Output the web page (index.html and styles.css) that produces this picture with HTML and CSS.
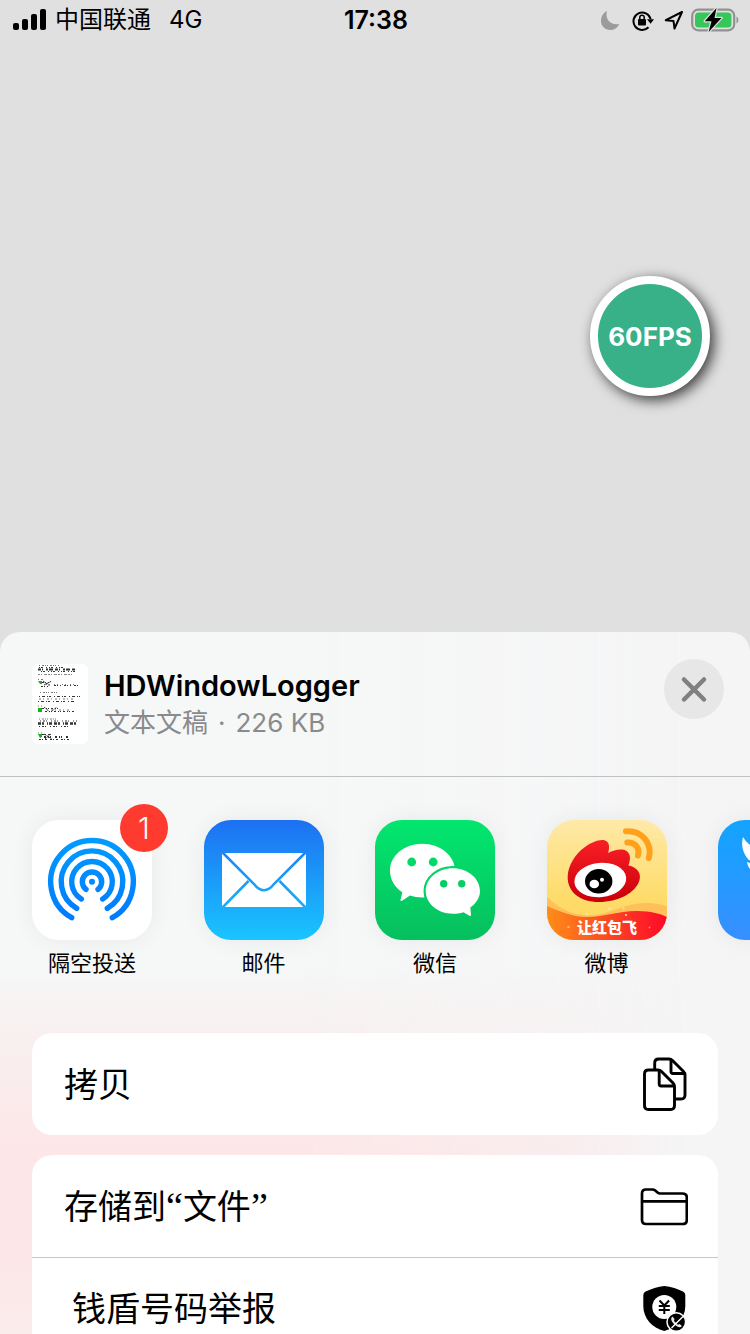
FILE: index.html
```html
<!DOCTYPE html>
<html lang="zh-CN">
<head>
<meta charset="utf-8">
<meta name="viewport" content="width=device-width, initial-scale=1">
<title>HDWindowLogger</title>
<link rel="stylesheet" href="styles.css">
</head>
<body>
<main class="screen">
  <section class="stage">
    <header class="status">
      <div class="status-left">
        <svg class="signal" width="34" height="22" viewBox="0 0 34 22" aria-hidden="true">
          <rect x="0" y="14" width="6" height="7" rx="2"/><rect x="9" y="10" width="6" height="11" rx="2"/><rect x="18" y="5" width="6" height="16" rx="2"/><rect x="27" y="0" width="6" height="21" rx="2"/>
        </svg>
        <span class="carrier">中国联通</span>
        <span class="network">4G</span>
      </div>
      <time class="clock">17:38</time>
      <div class="status-right">
        <svg width="25" height="24" viewBox="0 0 25 24" aria-hidden="true"><path d="M7 3C5 10 9 17.500 19.300 16C17.500 20 14 22 10.300 22C5 22 1 18 1 12.800C1 8.500 3.500 4.500 7 3Z" fill="#9b9b9b"/></svg>
        <svg width="25" height="24" viewBox="0 0 25 24" aria-hidden="true">
          <path d="M16.500 19.200A8.700 8.700 0 1 1 18.600 11" fill="none" stroke="#000" stroke-width="2"/>
          <path d="M15 11.300H22L18.600 15.800Z"/><rect x="6" y="11" width="8" height="6.500" rx="1"/>
          <path d="M7.800 11V9.500A2.200 2.200 0 0 1 12.200 9.500V11" fill="none" stroke="#000" stroke-width="1.500"/>
        </svg>
        <svg width="20" height="24" viewBox="0 0 20 24" aria-hidden="true"><path d="M18 4L1.800 12.200L9.500 12.900L10.500 20.500Z" fill="none" stroke="#000" stroke-width="2" stroke-linejoin="round"/></svg>
        <svg width="48" height="26" viewBox="0 0 48 26" aria-hidden="true">
          <rect x="1.200" y="2.700" width="42" height="20.600" rx="6" fill="none" stroke="#929292" stroke-width="2.200"/>
          <rect x="4" y="5.500" width="36.400" height="15" rx="3.500" fill="#35c759"/>
          <path d="M45.500 9.500C48 11 48 15 45.500 16.500Z" fill="#929292"/>
          <path d="M25.500 1L13.800 14.200H20.500L17.600 25L30.500 11H23.500Z" stroke="#e0e0e0" stroke-width="2.500" paint-order="stroke" stroke-linejoin="round"/>
        </svg>
      </div>
    </header>
    <button class="fps" type="button">60FPS</button>
  </section>

  <section class="sheet">
    <header class="file">
      <svg class="thumb" width="56" height="80" viewBox="0 0 56 80" aria-hidden="true">
        <g fill="none" stroke="#333" stroke-width="1">
          <path d="M7 1.500H27M6 15.500H11M8 28.500H27M6 42H10M7 55H26M6 69H10" stroke-dasharray="1 2 2 1 1 1" stroke="#777"/>
          <path d="M6 5.500H44" stroke-width="2" stroke-dasharray="3 1 1 3 2 1 4 2"/>
          <path d="M7 3.500H34M9 7.500H45" stroke-dasharray="1 1 2 3 1 2"/>
          <path d="M6 10.500H41" stroke-dasharray="2 1 1 2 3 1" stroke="#888"/>
          <path d="M10 18.500H20M9 22.500H19M22 21.500H47" stroke-dasharray="2 1 1 2 1 3"/>
          <path d="M11 17L18 22M12 21L20 17" stroke-dasharray="2 1"/>
          <path d="M14 20.500H42" stroke-dasharray="1 2 1 4" stroke="#777"/>
          <path d="M7 32.500H48M6 37.500H42" stroke-dasharray="1 2 3 2 1 1 2 3"/>
          <path d="M7 35H42" stroke-dasharray="2 2 1 3" stroke="#777"/>
          <path d="M10 44.500H28M13 47.500H42" stroke-dasharray="2 2 1 1 1 2"/>
          <path d="M12 43L18 48M20 47L25 43" stroke-dasharray="2 1"/>
          <path d="M15 46H38" stroke-dasharray="1 3 2 2" stroke="#777"/>
          <path d="M6 59.500H47" stroke-width="2.500" stroke-dasharray="3 1 2 3 1 1 3 2"/>
          <path d="M8 57H45M7 62.500H40" stroke-dasharray="1 2 2 1 1 4"/>
          <path d="M10 70.500H20M7 75.500H40" stroke-dasharray="2 1 1 2 2 3"/>
          <path d="M12 70L20 75M13 75L19 70" stroke-dasharray="2 1"/>
          <path d="M12 73H38" stroke-width="2" stroke-dasharray="2 2 1 1 1 4"/>
        </g>
        <g fill="#13b51b"><path d="M6 17H10V20H8ZM6 44H10V48H6ZM6 70H10V73L8 74Z"/></g>
      </svg>
      <div class="file-text">
        <h1 class="file-name">HDWindowLogger</h1>
        <p class="file-meta">文本文稿<span class="dot">·</span>226 KB</p>
      </div>
      <button class="close" type="button" aria-label="关闭">
        <svg width="28" height="28" viewBox="0 0 28 28" aria-hidden="true"><path d="M4 4.500L24 24.500M24 4.500L4 24.500" stroke="#808082" stroke-width="4.500" stroke-linecap="round"/></svg>
      </button>
    </header>

    <nav class="apps">
      <button class="app" type="button">
        <span class="tile">
          <svg class="art" viewBox="0 0 120 120" aria-hidden="true">
            <defs><linearGradient id="air" gradientUnits="userSpaceOnUse" x1="0" y1="18" x2="0" y2="100"><stop offset="0" stop-color="#009cff"/><stop offset="1" stop-color="#007aff"/></linearGradient></defs>
            <rect width="120" height="120" fill="#fff"/>
            <g fill="none" stroke="url(#air)" stroke-width="5.400" stroke-linecap="round">
              <path d="M39.700 97.700A41.300 41.300 0 1 1 80.300 97.700"/><path d="M44.700 88.400A30.800 30.800 0 1 1 75.300 88.400"/><path d="M49.300 79A20.300 20.300 0 1 1 70.700 79"/><path d="M54 69.300A9.700 9.700 0 1 1 66 69.300"/>
            </g>
            <circle cx="60" cy="61.700" r="3" fill="#008cff"/>
          </svg>
        </span>
        <span class="app-name">隔空投送</span>
        <span class="badge">1</span>
      </button>
      <button class="app" type="button">
        <span class="tile">
          <svg class="art" viewBox="0 0 120 120" aria-hidden="true">
            <defs><linearGradient id="mail" gradientUnits="userSpaceOnUse" x1="0" y1="0" x2="0" y2="120"><stop offset="0" stop-color="#1d70f2"/><stop offset="1" stop-color="#19c5ff"/></linearGradient></defs>
            <rect width="120" height="120" fill="url(#mail)"/>
            <rect x="18" y="33" width="84" height="54" rx="1.500" fill="#fff"/>
            <path d="M18 32L50.500 64.500C56 72 64 72 69.500 64.500L102 32M18 88L44.500 61M102 88L75.500 61" fill="none" stroke="url(#mail)" stroke-width="2.500"/>
          </svg>
        </span>
        <span class="app-name">邮件</span>
      </button>
      <button class="app" type="button">
        <span class="tile">
          <svg class="art" viewBox="0 0 120 120" aria-hidden="true">
            <defs><linearGradient id="chat" gradientUnits="userSpaceOnUse" x1="0" y1="0" x2="0" y2="120"><stop offset="0" stop-color="#02e66e"/><stop offset="1" stop-color="#06bf5e"/></linearGradient></defs>
            <rect width="120" height="120" fill="url(#chat)"/>
            <path d="M47.300 23.700C65 23.700 80 35.500 80 50.500C80 65.500 65 77.500 47.300 77.500C43 77.500 38.500 76.800 35 75.600L27 80.800C25.800 81.500 25.300 81 25.600 79.800L27.300 72.300C19.500 67 15 59.500 15 50.500C15 35.500 29.600 23.700 47.300 23.700Z" fill="#fff"/>
            <circle cx="36.700" cy="42" r="4.400" fill="#03d968"/><circle cx="58.200" cy="42" r="4.400" fill="#03d968"/>
            <path d="M77.800 48.300C92.800 48.300 105 58.500 105 71C105 77.500 101 83.500 95.300 87.600L96 94.800C96 96.200 95 96.400 94 95.600L88.500 92.200C85 93.200 81.500 93.700 77.800 93.700C62.800 93.700 50.700 83.500 50.700 71C50.700 58.500 62.800 48.300 77.800 48.300Z" fill="#fff" stroke="url(#chat)" stroke-width="4.400" paint-order="stroke"/>
            <circle cx="68.700" cy="63.800" r="3.700" fill="#04cf64"/><circle cx="86.700" cy="63.800" r="3.700" fill="#04cf64"/>
          </svg>
        </span>
        <span class="app-name">微信</span>
      </button>
      <button class="app" type="button">
        <span class="tile">
          <svg class="art" viewBox="0 0 120 120" aria-hidden="true">
            <defs>
              <linearGradient id="sun" x1="0" y1="0" x2="0" y2="1"><stop offset="0" stop-color="#fee9a8"/><stop offset=".7" stop-color="#fedb66"/></linearGradient>
              <linearGradient id="ribbon" x1="0" y1="0" x2="1" y2="0"><stop offset="0" stop-color="#ff8d18"/><stop offset=".5" stop-color="#fb4a20"/><stop offset="1" stop-color="#ff0829"/></linearGradient>
              <linearGradient id="flame" x1="0" y1="0" x2="0" y2="1"><stop offset="0" stop-color="#fa1f27"/><stop offset="1" stop-color="#c90009"/></linearGradient>
            </defs>
            <rect width="120" height="120" fill="url(#sun)"/>
            <path d="M0 77C14 90 28 97 48 95C68 92 80 82 102 83C110 83.500 116 85 120 86V120H0Z" fill="#ffb75a" opacity=".75"/>
            <path d="M0 86C14 92 26 97 40 97C58 97 70 91 90 91C104 91 114 94 120 97V120H0Z" fill="url(#ribbon)"/>
            <g fill="#ffe9a0"><circle cx="40" cy="94" r="1"/><circle cx="62.500" cy="88.500" r="1.300"/><circle cx="76.500" cy="88.500" r="1"/><circle cx="21.500" cy="107" r="1.300" fill="#ffb64a"/><circle cx="102.500" cy="107.500" r="1" fill="#ff9a38"/><circle cx="79" cy="95" r="1"/></g>
            <path d="M20.700 56C21 46 28 34 38 27C45 22 53 19 58 20.500C63 22 62.500 28 61.200 33C67 30 75 28 79.500 31C84 34 83.500 40 81.500 45.500C90 47 94.500 53 92.500 60C89 73 71 82 52 82C33 82 20 72 20.700 56Z" fill="url(#flame)"/>
            <ellipse cx="53.300" cy="60" rx="26" ry="17.200" fill="#fff" transform="rotate(-6 53.300 60)"/>
            <ellipse cx="51.700" cy="61.300" rx="13.700" ry="12.200"/>
            <ellipse cx="47.300" cy="64" rx="4.800" ry="4.300" fill="#fff"/><circle cx="55" cy="59.700" r="2" fill="#fff"/>
            <path d="M79 11.300C94 10 106 23 101.800 38M80.300 22.500C88 22 93 28 91 35.500" fill="none" stroke="#ffa11c" stroke-width="6" stroke-linecap="round"/>
            <text class="ribbon-text" x="60" y="113" text-anchor="middle">让红包飞</text>
          </svg>
        </span>
        <span class="app-name">微博</span>
      </button>
      <button class="app" type="button" aria-label="更多应用">
        <span class="tile">
          <svg class="art" viewBox="0 0 120 120" aria-hidden="true">
            <defs><linearGradient id="bird" x1="0" y1="0" x2="0" y2="1"><stop offset="0" stop-color="#12a4ff"/><stop offset="1" stop-color="#378fff"/></linearGradient></defs>
            <rect width="120" height="120" fill="url(#bird)"/>
            <path d="M25 17C29 24 38 31 50 33V56H42C35 53 30 49 29 42C31 43 33 43 34 43C27 37 22 28 25 17Z" fill="#fff"/>
            <path d="M28 40.500L36 42" stroke="#189fff" stroke-width="2"/>
          </svg>
        </span>
      </button>
    </nav>

    <div class="actions">
      <div class="group">
        <button class="row" type="button"><span class="row-label">拷贝</span>
          <svg width="48" height="56" viewBox="0 0 48 56" aria-hidden="true"><g fill="none" stroke="#000" stroke-width="2.900" stroke-linejoin="round" stroke-linecap="round">
            <path d="M14.700 13V7Q14.700 3 18.700 3H29Q31 3 32.500 4.500L43.500 15.500Q45 17 45 19V39Q45 43 41 43H36.500"/><path d="M31 4V15.500Q31 17.500 33 17.500H44.500"/>
            <path d="M8.500 14H18Q20 14 21.500 15.500L33 27Q34.500 28.500 34.500 30.500V49.500Q34.500 53.500 30.500 53.500H8.500Q4.500 53.500 4.500 49.500V18Q4.500 14 8.500 14Z"/><path d="M19.200 15V28Q19.200 30 21.200 30H34"/>
          </g></svg>
        </button>
      </div>
      <div class="group">
        <button class="row" type="button"><span class="row-label">存储到<span class="quote">“</span>文件<span class="quote">”</span></span>
          <svg width="48" height="56" viewBox="0 0 48 56" aria-hidden="true"><path d="M2 15.500Q2 11.500 6 11.500H12.500Q14 11.500 15.200 12.500L17.500 14.500Q18.700 15.500 20.200 15.500H42.500Q46.800 15.500 46.800 19.500V42Q46.800 46 42.800 46H6Q2 46 2 42ZM2 23.300H46.800" fill="none" stroke="#000" stroke-width="2.700"/></svg>
        </button>
        <button class="row row-inset" type="button"><span class="row-label">钱盾号码举报</span>
          <svg width="48" height="56" viewBox="0 0 48 56" aria-hidden="true">
            <path d="M24.300 6C31 6.500 38 9 43 11.500Q45.300 12.700 45.300 15V26C45.300 38 36 48 24.300 51C12 48 3.300 38 3.300 26V15Q3.300 12.700 5.600 11.500C11 9 18 6.500 24.300 6Z"/>
            <circle cx="24.300" cy="27" r="12" fill="#fff"/>
            <path d="M19.500 20.500L24.300 25.500L29.100 20.500M18.800 26H29.800M18.800 30H29.800M24.300 25.500V34" fill="none" stroke="#000" stroke-width="2"/>
            <circle cx="36.300" cy="42" r="9.300" stroke="#fff" stroke-width="1.500"/>
            <path d="M31.500 48L43 36.500" stroke="#fff" stroke-width="1.500"/>
            <path d="M32.500 36.500C30 38.500 31.500 41.500 34 44C37 47 40 48.500 42 46L39.500 44L37.800 44.800L34 41L34.500 39Z" fill="#fff" opacity=".9"/>
          </svg>
        </button>
      </div>
    </div>
  </section>
</main>
</body>
</html>
```
FILE: styles.css
```css
* { box-sizing: border-box; }

body {
  margin: 0;
  background: #e0e0e0;
  color: #000;
  font-family: Inter, "Noto Sans CJK SC", sans-serif;
}

button {
  margin: 0;
  padding: 0;
  border: 0;
  background: none;
  color: inherit;
  font: inherit;
}

svg { display: block; flex: none; }

.screen {
  display: grid;
  grid-template-rows: minmax(0, 9fr) minmax(0, 10fr);
  height: 100vh;
  overflow: hidden;
}

.stage { position: relative; }

.status {
  display: grid;
  grid-template-columns: 1fr auto 1fr;
  align-items: center;
  height: 40px;
  padding: 0 11px 0 13px;
  font-size: 24px;
}

.status-left, .status-right { display: flex; align-items: center; }
.status-left { line-height: 36px; }
.carrier { margin-left: 8px; }
.network { margin-left: 18px; }
.clock { font-size: 25px; font-weight: 600; }
.status-right { justify-content: flex-end; gap: 7px; }

.fps {
  position: absolute;
  top: 276px;
  right: 40px;
  width: 120px;
  height: 120px;
  border: 8px solid #fff;
  border-radius: 50%;
  background: #38b088;
  box-shadow: 4px 4px 14px rgba(0, 0, 0, .75);
  color: #fff;
  font-size: 26px;
  font-weight: 700;
}

.sheet {
  overflow: hidden;
  border-radius: 20px 20px 0 0;
  background:
    linear-gradient(90deg, rgba(245, 245, 246, 0) 40%, rgba(245, 245, 246, .4) 75%, #f5f5f6 92%),
    linear-gradient(#f6f7f7 48%, #f8f0f0 57%, #fde6e8 75%, #fce7e8 90%, #fbecec);
}

.file {
  display: flex;
  align-items: flex-start;
  padding: 32px 26px 32px 32px;
  border-bottom: 1px solid #c0c2c2;
}

.thumb { border-radius: 6px; background: #fff; }

.file-text { flex: 1; margin-left: 16px; }

.file-name {
  margin: 2px 0 0;
  font-size: 29px;
  font-weight: 600;
  line-height: 40px;
}

.file-meta {
  margin: 0;
  color: #8a8a8c;
  font-size: 26px;
  line-height: 34px;
}

.dot { padding: 0 10px; }

.close {
  display: grid;
  place-items: center;
  width: 60px;
  height: 60px;
  margin-top: -5px;
  border-radius: 50%;
  background: #e7e7e7;
}

.apps {
  display: flex;
  justify-content: space-between;
  margin-right: -88px;
  padding: 43px 0 55px 32px;
}

.app {
  position: relative;
  display: flex;
  flex: none;
  flex-direction: column;
  align-items: center;
  width: 120px;
}

.tile {
  width: 120px;
  height: 120px;
  overflow: hidden;
  border-radius: 27px;
  box-shadow: 0 0 24px rgba(0, 0, 0, .06);
}

.art { width: 100%; height: 100%; }

.app-name {
  margin-top: 8px;
  font-size: 22px;
  line-height: 30px;
}

.badge {
  position: absolute;
  top: -16px;
  right: -16px;
  width: 48px;
  height: 48px;
  border-radius: 50%;
  background: #ff3b30;
  color: #fff;
  font-size: 30px;
  font-weight: 300;
  line-height: 48px;
  text-align: center;
}

.ribbon-text {
  fill: #fff;
  font-family: "Noto Sans CJK SC", sans-serif;
  font-size: 15px;
  font-weight: 900;
}

.actions {
  display: flex;
  flex-direction: column;
  gap: 20px;
  padding: 0 32px;
}

.group { overflow: hidden; border-radius: 20px; background: #fff; }

.row {
  display: flex;
  align-items: center;
  justify-content: space-between;
  width: 100%;
  height: 102px;
  padding: 0 30px 0 32px;
  font-size: 34px;
  text-align: left;
}

.row-label { padding-bottom: 3px; }
.row-inset { padding-left: 40px; border-top: 1px solid #c8c8ca; }

.quote {
  font-family: "Liberation Serif", serif;
  font-size: 38px;
  line-height: 1;
}
```
